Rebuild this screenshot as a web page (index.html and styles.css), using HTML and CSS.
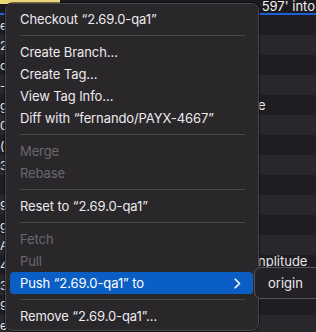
FILE: index.html
```html
<!DOCTYPE html>
<html>
<head>
<meta charset="utf-8">
<link rel="stylesheet" href="styles.css">
</head>
<body>
<div class="screen">
  <div class="topbar">
    <span class="hl"></span>
    <span class="toptext">597' into</span>
  </div>
  <div class="blueline"></div>
  <div class="rows">
    <div class="row"><span class="lc">e</span><span class="rc"></span></div>
    <div class="row alt"><span class="lc">2</span><span class="rc"></span></div>
    <div class="row"><span class="lc">o</span><span class="rc"></span></div>
    <div class="row alt"><span class="lc">-</span><span class="rc"></span></div>
    <div class="row"><span class="lc">g</span><span class="rc">e</span></div>
    <div class="row alt"><span class="lc">0</span><span class="rc"></span></div>
    <div class="row"><span class="lc">(</span><span class="rc"></span></div>
    <div class="row alt"><span class="lc">3</span><span class="rc"></span></div>
    <div class="row"><span class="lc"></span><span class="rc"></span></div>
    <div class="row alt"><span class="lc">9</span><span class="rc"></span></div>
    <div class="row"><span class="lc">g</span><span class="rc"></span></div>
    <div class="row alt"><span class="lc">A</span><span class="rc"></span></div>
    <div class="row"><span class="lc">4</span><span class="rc up">nplitude</span></div>
    <div class="row alt"><span class="lc">3</span><span class="rc"></span></div>
    <div class="row"><span class="lc">9</span><span class="rc"></span></div>
    <div class="row alt"><span class="lc">e</span><span class="rc"></span></div>
  </div>

  <div class="menu">
    <div class="item">Checkout “2.69.0-qa1”</div>
    <div class="sep"></div>
    <div class="item">Create Branch…</div>
    <div class="item">Create Tag…</div>
    <div class="item">View Tag Info…</div>
    <div class="item">Diff with “fernando/PAYX-4667”</div>
    <div class="sep"></div>
    <div class="item dis">Merge</div>
    <div class="item dis">Rebase</div>
    <div class="sep"></div>
    <div class="item">Reset to “2.69.0-qa1”</div>
    <div class="sep"></div>
    <div class="item dis">Fetch</div>
    <div class="item dis">Pull</div>
    <div class="item active"><span>Push “2.69.0-qa1” to</span>
      <svg class="chev" width="7" height="11" viewBox="0 0 7 11"><path d="M1.2 1.2 L5.6 5.5 L1.2 9.8" fill="none" stroke="#fff" stroke-width="1.6" stroke-linecap="round" stroke-linejoin="round"/></svg>
    </div>
    <div class="sep"></div>
    <div class="item">Remove “2.69.0-qa1”…</div>
  </div>

  <div class="submenu">
    <div class="subitem">origin</div>
  </div>
</div>
</body>
</html>
```

FILE: styles.css
```css
html, body {
  margin: 0;
  padding: 0;
  background: #1e1d21;
}
body {
  font-family: Inter, "Noto Sans", sans-serif;
  -webkit-font-smoothing: antialiased;
}
.screen {
  position: relative;
  width: 316px;
  height: 332px;
  overflow: hidden;
  background: #1e1d21;
}
.topbar {
  height: 13px;
  display: flex;
  justify-content: space-between;
  background: #1b1a1e;
}
.hl {
  width: 60px;
  height: 4px;
  background: #e9d77a;
}
.toptext {
  line-height: 13px;
  padding-right: 1px;
  color: #f2f2f2;
  font-size: 13px;
  white-space: nowrap;
}
.blueline {
  height: 2px;
  background: #1d5fd6;
}
.rows {
  display: flex;
  flex-direction: column;
}
.row {
  height: 20px;
  display: flex;
  justify-content: space-between;
  align-items: center;
  background: #1e1d22;
  color: #e6e6e6;
  font-size: 12px;
}
.row.alt {
  background: #28272c;
}
.lc {
  width: 8px;
  white-space: nowrap;
}
.rc {
  width: 58px;
  white-space: nowrap;
  overflow: hidden;
  font-size: 13px;
}
.rc.up {
  margin-top: -8px;
}
.menu {
  position: absolute;
  left: 5px;
  top: 3px;
  width: 254px;
  height: 328px;
  box-sizing: border-box;
  padding: 4px 5px 3px 4px;
  background: #2a272b;
  border: 1px solid #4a474b;
  border-radius: 7px;
  box-shadow: 0 0 0 0.5px #000;
  display: flex;
  flex-direction: column;
}
.item {
  height: 22px;
  flex: none;
  display: flex;
  align-items: center;
  justify-content: space-between;
  padding: 0 12px 0 10px;
  border-radius: 4px;
  color: #eceaed;
  font-size: 13px;
  letter-spacing: -0.1px;
  white-space: nowrap;
}
.item.dis {
  color: #6b686c;
}
.item.active {
  background: #0b5ec4;
  color: #ffffff;
}
.chev {
  display: block;
}
.sep {
  height: 11px;
  flex: none;
  display: flex;
  align-items: center;
  margin: 0 8px 0 10px;
}
.sep::before {
  content: "";
  flex: 1;
  height: 1px;
  background: #4a474b;
}
.submenu {
  position: absolute;
  left: 254px;
  top: 267px;
  width: 70px;
  height: 32px;
  box-sizing: border-box;
  background: #232126;
  border: 1px solid #56535a;
  border-radius: 7px;
  display: flex;
  align-items: center;
  padding-left: 13px;
}
.subitem {
  color: #eceaed;
  font-size: 13px;
}
```
